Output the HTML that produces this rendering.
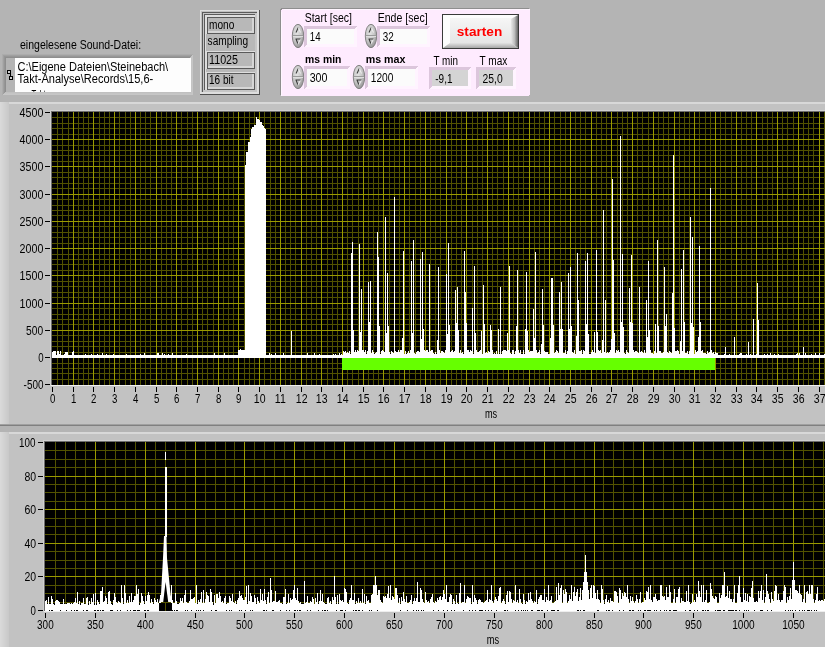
<!DOCTYPE html>
<html><head><meta charset="utf-8"><style>
html,body{margin:0;padding:0;background:#b4b4b4;overflow:hidden;width:825px;height:647px}
svg{display:block;font-family:"Liberation Sans",sans-serif;will-change:transform}
</style></head><body>
<svg width="825" height="647" viewBox="0 0 825 647" shape-rendering="crispEdges"><defs>
<radialGradient id="spg" cx="0.4" cy="0.35" r="0.7"><stop offset="0" stop-color="#e4e4e4"/><stop offset="0.6" stop-color="#c2c2c2"/><stop offset="1" stop-color="#8c8c8c"/></radialGradient>
<linearGradient id="btg" x1="0" y1="0" x2="0" y2="1"><stop offset="0" stop-color="#f8f8f8"/><stop offset="1" stop-color="#e2e2e2"/></linearGradient>
<linearGradient id="btr" x1="0" y1="0" x2="1" y2="0"><stop offset="0" stop-color="#e8e8e8"/><stop offset="0.5" stop-color="#bdbdbd"/><stop offset="1" stop-color="#666666"/></linearGradient>
<linearGradient id="btb" x1="0" y1="0" x2="0" y2="1"><stop offset="0" stop-color="#e2e2e2"/><stop offset="1" stop-color="#a6a6a6"/></linearGradient>
<linearGradient id="strip" x1="0" y1="0" x2="1" y2="0"><stop offset="0" stop-color="#dadada"/><stop offset="1" stop-color="#c8c8c8"/></linearGradient>
</defs><rect x="0" y="0" width="825" height="647" fill="#b4b4b4"/><text x="20.00" y="49.2" font-size="12" fill="#000" textLength="121.07" lengthAdjust="spacingAndGlyphs">eingelesene Sound-Datei:</text><g><rect x="2" y="54" width="191" height="41" fill="#b4b4b4"/><rect x="2" y="54" width="191" height="1" fill="#acacac"/><rect x="3" y="55" width="189" height="1" fill="#a0a0a0"/><rect x="4" y="56" width="187" height="1" fill="#969696"/><rect x="5" y="57" width="185" height="1" fill="#8e8e8e"/><rect x="2" y="54" width="1" height="41" fill="#acacac"/><rect x="3" y="55" width="1" height="39" fill="#a0a0a0"/><rect x="4" y="56" width="1" height="37" fill="#969696"/><rect x="5" y="57" width="1" height="35" fill="#8e8e8e"/><rect x="3" y="94" width="190" height="1" fill="#c6c6c6"/><rect x="192" y="55" width="1" height="40" fill="#c6c6c6"/><rect x="4" y="93" width="188" height="1" fill="#c4c4c4"/><rect x="191" y="56" width="1" height="38" fill="#c4c4c4"/><rect x="5" y="92" width="186" height="1" fill="#c0c0c0"/><rect x="190" y="57" width="1" height="36" fill="#c0c0c0"/><rect x="6" y="91" width="184" height="1" fill="#bcbcbc"/><rect x="189" y="58" width="1" height="34" fill="#bcbcbc"/><rect x="6" y="58" width="9" height="34" fill="#b4b4b4"/><rect x="15" y="58" width="176" height="34" fill="#fdfdfd"/></g><rect x="7" y="70" width="4" height="4" fill="#000"/><rect x="8" y="71" width="2" height="2" fill="#cfcfcf"/><rect x="10" y="74" width="1" height="2" fill="#000"/><rect x="9" y="76" width="4" height="4" fill="#000"/><rect x="10" y="77" width="2" height="2" fill="#cfcfcf"/><clipPath id="pc"><rect x="15" y="58" width="176" height="34"/></clipPath><g clip-path="url(#pc)"><text x="17.50" y="70.8" font-size="12" fill="#000" textLength="150.64" lengthAdjust="spacingAndGlyphs">C:\Eigene Dateien\Steinebach\</text><text x="17.50" y="83" font-size="12" fill="#000" textLength="135.75" lengthAdjust="spacingAndGlyphs">Takt-Analyse\Records\15,6-</text><text x="17.50" y="98.5" font-size="12" fill="#000" textLength="44.29" lengthAdjust="spacingAndGlyphs">sec Takt.wav</text></g><rect x="200" y="10" width="60" height="85" fill="#b8b8b8"/><rect x="200" y="10" width="59" height="1" fill="#dedede"/><rect x="200" y="10" width="1" height="84" fill="#dedede"/><rect x="201" y="11" width="57" height="1" fill="#c0c0c0"/><rect x="201" y="11" width="1" height="82" fill="#c0c0c0"/><rect x="202" y="12" width="56" height="1" fill="#5a5a5a"/><rect x="202" y="12" width="1" height="80" fill="#5a5a5a"/><rect x="203" y="13" width="54" height="1" fill="#c6c6c6"/><rect x="203" y="13" width="1" height="78" fill="#c6c6c6"/><rect x="204" y="14" width="52" height="1" fill="#5a5a5a"/><rect x="204" y="14" width="1" height="76" fill="#5a5a5a"/><rect x="205" y="15" width="50" height="1" fill="#dedede"/><rect x="205" y="15" width="1" height="75" fill="#dedede"/><rect x="200" y="94" width="60" height="1" fill="#505050"/><rect x="259" y="10" width="1" height="85" fill="#505050"/><rect x="201" y="92" width="58" height="1" fill="#dedede"/><rect x="201" y="93" width="58" height="1" fill="#dedede"/><rect x="257" y="11" width="1" height="82" fill="#dedede"/><rect x="258" y="11" width="1" height="83" fill="#dedede"/><rect x="203" y="90" width="54" height="1" fill="#c6c6c6"/><rect x="203" y="91" width="54" height="1" fill="#c6c6c6"/><rect x="255" y="13" width="1" height="78" fill="#c6c6c6"/><rect x="256" y="13" width="1" height="79" fill="#c6c6c6"/><rect x="206" y="16" width="49" height="1" fill="#dedede"/><rect x="206" y="16" width="1" height="18" fill="#dedede"/><rect x="207" y="17" width="47" height="1" fill="#5a5a5a"/><rect x="207" y="17" width="1" height="16" fill="#5a5a5a"/><rect x="208" y="18" width="44" height="13" fill="#b8b8b8"/><rect x="208" y="31" width="46" height="1" fill="#d6d6d6"/><rect x="208" y="32" width="46" height="1" fill="#d6d6d6"/><rect x="252" y="18" width="1" height="15" fill="#d6d6d6"/><rect x="253" y="18" width="1" height="15" fill="#d6d6d6"/><rect x="207" y="33" width="48" height="1" fill="#5a5a5a"/><rect x="254" y="17" width="1" height="17" fill="#5a5a5a"/><rect x="206" y="51" width="49" height="1" fill="#dedede"/><rect x="206" y="51" width="1" height="18" fill="#dedede"/><rect x="207" y="52" width="47" height="1" fill="#5a5a5a"/><rect x="207" y="52" width="1" height="16" fill="#5a5a5a"/><rect x="208" y="53" width="44" height="13" fill="#b8b8b8"/><rect x="208" y="66" width="46" height="1" fill="#d6d6d6"/><rect x="208" y="67" width="46" height="1" fill="#d6d6d6"/><rect x="252" y="53" width="1" height="15" fill="#d6d6d6"/><rect x="253" y="53" width="1" height="15" fill="#d6d6d6"/><rect x="207" y="68" width="48" height="1" fill="#5a5a5a"/><rect x="254" y="52" width="1" height="17" fill="#5a5a5a"/><rect x="206" y="72" width="49" height="1" fill="#dedede"/><rect x="206" y="72" width="1" height="18" fill="#dedede"/><rect x="207" y="73" width="47" height="1" fill="#5a5a5a"/><rect x="207" y="73" width="1" height="16" fill="#5a5a5a"/><rect x="208" y="74" width="44" height="13" fill="#b8b8b8"/><rect x="208" y="87" width="46" height="1" fill="#d6d6d6"/><rect x="208" y="88" width="46" height="1" fill="#d6d6d6"/><rect x="252" y="74" width="1" height="15" fill="#d6d6d6"/><rect x="253" y="74" width="1" height="15" fill="#d6d6d6"/><rect x="207" y="89" width="48" height="1" fill="#5a5a5a"/><rect x="254" y="73" width="1" height="17" fill="#5a5a5a"/><text x="209.00" y="29" font-size="12" fill="#000" textLength="25.31" lengthAdjust="spacingAndGlyphs">mono</text><text x="207.60" y="45.3" font-size="12" fill="#000" textLength="40.53" lengthAdjust="spacingAndGlyphs">sampling</text><text x="209.00" y="63.6" font-size="12" fill="#000" textLength="29.03" lengthAdjust="spacingAndGlyphs">11025</text><text x="209.00" y="84.4" font-size="12" fill="#000" textLength="24.45" lengthAdjust="spacingAndGlyphs">16 bit</text><path d="M283 8 H527 Q530 8 530 11 V93 Q530 96 527 96 H283 Q280 96 280 93 V11 Q280 8 283 8 Z" fill="#8e8e8e"/><path d="M284 9 H527 Q530 9 530 12 V93 Q530 96 527 96 H284 Q281 96 281 93 V12 Q281 9 284 9 Z" fill="#feebfe"/><rect x="284" y="9" width="246" height="1" fill="#fff6ff"/><rect x="281" y="12" width="1" height="84" fill="#fff6ff"/><text x="304.70" y="22" font-size="12" fill="#000" textLength="47.29" lengthAdjust="spacingAndGlyphs">Start [sec]</text><ellipse cx="298.0" cy="36.0" rx="5.7" ry="11.7" fill="url(#spg)" stroke="#7c7c7c" stroke-width="0.9" shape-rendering="auto"/><rect x="293" y="35" width="10" height="1" fill="#9a9a9a"/><rect x="293" y="36" width="10" height="1" fill="#dedede"/><path d="M296.0 32.5 L298.3 27.5" stroke="#3c3c3c" stroke-width="1.1" fill="none" shape-rendering="auto"/><path d="M298.3 27.5 L300.5 32.5" stroke="#f0f0f0" stroke-width="1" fill="none" shape-rendering="auto"/><path d="M295.5 39.0 H300.5 M296.0 39.0 L298.0 44.0" stroke="#3c3c3c" stroke-width="1.1" fill="none" shape-rendering="auto"/><path d="M298.0 44.0 L300.3 39.5" stroke="#eeeeee" stroke-width="1" fill="none" shape-rendering="auto"/><rect x="304" y="26" width="53" height="21" fill="#f6e6f6"/><path d="M304 26 H357 L354 29 H307 V44 L304 47 Z" fill="#dcc6dc"/><path d="M357 26 V47 H304 L307 44 H354 V29 Z" fill="#fff4ff"/><rect x="307" y="29" width="47" height="15" fill="#fbfbfb"/><text x="309.80" y="40.7" font-size="12" fill="#000" textLength="10.77" lengthAdjust="spacingAndGlyphs">14</text><text x="377.70" y="22" font-size="12" fill="#000" textLength="49.91" lengthAdjust="spacingAndGlyphs">Ende [sec]</text><ellipse cx="371.0" cy="36.0" rx="5.7" ry="11.7" fill="url(#spg)" stroke="#7c7c7c" stroke-width="0.9" shape-rendering="auto"/><rect x="366" y="35" width="10" height="1" fill="#9a9a9a"/><rect x="366" y="36" width="10" height="1" fill="#dedede"/><path d="M369.0 32.5 L371.3 27.5" stroke="#3c3c3c" stroke-width="1.1" fill="none" shape-rendering="auto"/><path d="M371.3 27.5 L373.5 32.5" stroke="#f0f0f0" stroke-width="1" fill="none" shape-rendering="auto"/><path d="M368.5 39.0 H373.5 M369.0 39.0 L371.0 44.0" stroke="#3c3c3c" stroke-width="1.1" fill="none" shape-rendering="auto"/><path d="M371.0 44.0 L373.3 39.5" stroke="#eeeeee" stroke-width="1" fill="none" shape-rendering="auto"/><rect x="377" y="26" width="53" height="21" fill="#f6e6f6"/><path d="M377 26 H430 L427 29 H380 V44 L377 47 Z" fill="#dcc6dc"/><path d="M430 26 V47 H377 L380 44 H427 V29 Z" fill="#fff4ff"/><rect x="380" y="29" width="47" height="15" fill="#fbfbfb"/><text x="382.80" y="40.8" font-size="12" fill="#000" textLength="10.96" lengthAdjust="spacingAndGlyphs">32</text><text x="305.10" y="63" font-size="11" font-weight="bold" fill="#000" textLength="36.36" lengthAdjust="spacingAndGlyphs">ms min</text><text x="365.70" y="63" font-size="11" font-weight="bold" fill="#000" textLength="39.73" lengthAdjust="spacingAndGlyphs">ms max</text><ellipse cx="298.0" cy="77.0" rx="5.7" ry="11.7" fill="url(#spg)" stroke="#7c7c7c" stroke-width="0.9" shape-rendering="auto"/><rect x="293" y="76" width="10" height="1" fill="#9a9a9a"/><rect x="293" y="77" width="10" height="1" fill="#dedede"/><path d="M296.0 73.5 L298.3 68.5" stroke="#3c3c3c" stroke-width="1.1" fill="none" shape-rendering="auto"/><path d="M298.3 68.5 L300.5 73.5" stroke="#f0f0f0" stroke-width="1" fill="none" shape-rendering="auto"/><path d="M295.5 80.0 H300.5 M296.0 80.0 L298.0 85.0" stroke="#3c3c3c" stroke-width="1.1" fill="none" shape-rendering="auto"/><path d="M298.0 85.0 L300.3 80.5" stroke="#eeeeee" stroke-width="1" fill="none" shape-rendering="auto"/><rect x="304" y="66" width="46" height="23" fill="#f6e6f6"/><path d="M304 66 H350 L347 69 H307 V86 L304 89 Z" fill="#dcc6dc"/><path d="M350 66 V89 H304 L307 86 H347 V69 Z" fill="#fff4ff"/><rect x="307" y="69" width="40" height="17" fill="#fbfbfb"/><text x="309.70" y="81.5" font-size="12" fill="#000" textLength="17.81" lengthAdjust="spacingAndGlyphs">300</text><ellipse cx="359.0" cy="77.0" rx="5.7" ry="11.7" fill="url(#spg)" stroke="#7c7c7c" stroke-width="0.9" shape-rendering="auto"/><rect x="354" y="76" width="10" height="1" fill="#9a9a9a"/><rect x="354" y="77" width="10" height="1" fill="#dedede"/><path d="M357.0 73.5 L359.3 68.5" stroke="#3c3c3c" stroke-width="1.1" fill="none" shape-rendering="auto"/><path d="M359.3 68.5 L361.5 73.5" stroke="#f0f0f0" stroke-width="1" fill="none" shape-rendering="auto"/><path d="M356.5 80.0 H361.5 M357.0 80.0 L359.0 85.0" stroke="#3c3c3c" stroke-width="1.1" fill="none" shape-rendering="auto"/><path d="M359.0 85.0 L361.3 80.5" stroke="#eeeeee" stroke-width="1" fill="none" shape-rendering="auto"/><rect x="365" y="66" width="53" height="23" fill="#f6e6f6"/><path d="M365 66 H418 L415 69 H368 V86 L365 89 Z" fill="#dcc6dc"/><path d="M418 66 V89 H365 L368 86 H415 V69 Z" fill="#fff4ff"/><rect x="368" y="69" width="47" height="17" fill="#fbfbfb"/><text x="370.80" y="81.5" font-size="12" fill="#000" textLength="22.63" lengthAdjust="spacingAndGlyphs">1200</text><text x="433.40" y="64.6" font-size="12" fill="#000" textLength="24.52" lengthAdjust="spacingAndGlyphs">T min</text><text x="479.60" y="64.6" font-size="12" fill="#000" textLength="27.79" lengthAdjust="spacingAndGlyphs">T max</text><rect x="429" y="67" width="42" height="22" fill="#f6e6f6"/><path d="M429 67 H471 L468 70 H432 V86 L429 89 Z" fill="#dcc6dc"/><path d="M471 67 V89 H429 L432 86 H468 V70 Z" fill="#fff4ff"/><rect x="432" y="70" width="36" height="16" fill="#d4d4d4"/><rect x="476" y="67" width="40" height="22" fill="#f6e6f6"/><path d="M476 67 H516 L513 70 H479 V86 L476 89 Z" fill="#dcc6dc"/><path d="M516 67 V89 H476 L479 86 H513 V70 Z" fill="#fff4ff"/><rect x="479" y="70" width="34" height="16" fill="#d4d4d4"/><text x="435.30" y="83.1" font-size="12" fill="#000" textLength="17.13" lengthAdjust="spacingAndGlyphs">-9,1</text><text x="482.50" y="83.1" font-size="12" fill="#000" textLength="20.13" lengthAdjust="spacingAndGlyphs">25,0</text><rect x="442" y="14" width="77" height="35" fill="#3a3a3a"/><rect x="443" y="15" width="75" height="33" fill="url(#btg)"/><path d="M443 15 H518 L512 18 H450 Z" fill="#fdfdfd" shape-rendering="auto"/><path d="M443 15 L450 18 V43 L443 48 Z" fill="#fdfdfd" shape-rendering="auto"/><path d="M518 15 V48 L511 43 V19 Z" fill="url(#btr)" shape-rendering="auto"/><path d="M443 48 H518 L511 43 H450 Z" fill="url(#btb)" shape-rendering="auto"/><text x="456.80" y="35.8" font-size="12" font-weight="bold" fill="#ff0000" textLength="45.42" lengthAdjust="spacingAndGlyphs">starten</text><rect x="0" y="102" width="825" height="2" fill="#d8d8d8"/><rect x="0" y="104" width="825" height="320" fill="#c2c2c2"/><rect x="0" y="102" width="9" height="322" fill="url(#strip)"/><rect x="0" y="424" width="825" height="1" fill="#a0a0a0"/><rect x="0" y="425" width="825" height="1" fill="#808080"/><rect x="0" y="426" width="825" height="6" fill="#b4b4b4"/><rect x="0" y="432" width="825" height="2" fill="#d8d8d8"/><rect x="0" y="434" width="825" height="213" fill="#c2c2c2"/><rect x="0" y="432" width="9" height="215" fill="url(#strip)"/><rect x="50" y="110" width="775" height="1" fill="#d0d0d0"/><rect x="50" y="110" width="1" height="276" fill="#d0d0d0"/><rect x="51" y="111" width="774" height="1" fill="#6e6e6e"/><rect x="51" y="111" width="1" height="274" fill="#6e6e6e"/><rect x="51" y="385" width="774" height="1" fill="#eeeeee"/><rect x="52" y="112" width="773" height="273" fill="#000"/><rect x="57" y="112" width="1" height="273" fill="#525200"/><rect x="62" y="112" width="1" height="273" fill="#525200"/><rect x="68" y="112" width="1" height="273" fill="#525200"/><rect x="78" y="112" width="1" height="273" fill="#525200"/><rect x="83" y="112" width="1" height="273" fill="#525200"/><rect x="88" y="112" width="1" height="273" fill="#525200"/><rect x="99" y="112" width="1" height="273" fill="#525200"/><rect x="104" y="112" width="1" height="273" fill="#525200"/><rect x="109" y="112" width="1" height="273" fill="#525200"/><rect x="119" y="112" width="1" height="273" fill="#525200"/><rect x="125" y="112" width="1" height="273" fill="#525200"/><rect x="130" y="112" width="1" height="273" fill="#525200"/><rect x="140" y="112" width="1" height="273" fill="#525200"/><rect x="145" y="112" width="1" height="273" fill="#525200"/><rect x="150" y="112" width="1" height="273" fill="#525200"/><rect x="161" y="112" width="1" height="273" fill="#525200"/><rect x="166" y="112" width="1" height="273" fill="#525200"/><rect x="171" y="112" width="1" height="273" fill="#525200"/><rect x="181" y="112" width="1" height="273" fill="#525200"/><rect x="187" y="112" width="1" height="273" fill="#525200"/><rect x="192" y="112" width="1" height="273" fill="#525200"/><rect x="202" y="112" width="1" height="273" fill="#525200"/><rect x="207" y="112" width="1" height="273" fill="#525200"/><rect x="213" y="112" width="1" height="273" fill="#525200"/><rect x="223" y="112" width="1" height="273" fill="#525200"/><rect x="228" y="112" width="1" height="273" fill="#525200"/><rect x="233" y="112" width="1" height="273" fill="#525200"/><rect x="244" y="112" width="1" height="273" fill="#525200"/><rect x="249" y="112" width="1" height="273" fill="#525200"/><rect x="254" y="112" width="1" height="273" fill="#525200"/><rect x="264" y="112" width="1" height="273" fill="#525200"/><rect x="270" y="112" width="1" height="273" fill="#525200"/><rect x="275" y="112" width="1" height="273" fill="#525200"/><rect x="285" y="112" width="1" height="273" fill="#525200"/><rect x="290" y="112" width="1" height="273" fill="#525200"/><rect x="295" y="112" width="1" height="273" fill="#525200"/><rect x="306" y="112" width="1" height="273" fill="#525200"/><rect x="311" y="112" width="1" height="273" fill="#525200"/><rect x="316" y="112" width="1" height="273" fill="#525200"/><rect x="327" y="112" width="1" height="273" fill="#525200"/><rect x="332" y="112" width="1" height="273" fill="#525200"/><rect x="337" y="112" width="1" height="273" fill="#525200"/><rect x="347" y="112" width="1" height="273" fill="#525200"/><rect x="352" y="112" width="1" height="273" fill="#525200"/><rect x="358" y="112" width="1" height="273" fill="#525200"/><rect x="368" y="112" width="1" height="273" fill="#525200"/><rect x="373" y="112" width="1" height="273" fill="#525200"/><rect x="378" y="112" width="1" height="273" fill="#525200"/><rect x="389" y="112" width="1" height="273" fill="#525200"/><rect x="394" y="112" width="1" height="273" fill="#525200"/><rect x="399" y="112" width="1" height="273" fill="#525200"/><rect x="409" y="112" width="1" height="273" fill="#525200"/><rect x="415" y="112" width="1" height="273" fill="#525200"/><rect x="420" y="112" width="1" height="273" fill="#525200"/><rect x="430" y="112" width="1" height="273" fill="#525200"/><rect x="435" y="112" width="1" height="273" fill="#525200"/><rect x="440" y="112" width="1" height="273" fill="#525200"/><rect x="451" y="112" width="1" height="273" fill="#525200"/><rect x="456" y="112" width="1" height="273" fill="#525200"/><rect x="461" y="112" width="1" height="273" fill="#525200"/><rect x="472" y="112" width="1" height="273" fill="#525200"/><rect x="477" y="112" width="1" height="273" fill="#525200"/><rect x="482" y="112" width="1" height="273" fill="#525200"/><rect x="492" y="112" width="1" height="273" fill="#525200"/><rect x="497" y="112" width="1" height="273" fill="#525200"/><rect x="503" y="112" width="1" height="273" fill="#525200"/><rect x="513" y="112" width="1" height="273" fill="#525200"/><rect x="518" y="112" width="1" height="273" fill="#525200"/><rect x="523" y="112" width="1" height="273" fill="#525200"/><rect x="534" y="112" width="1" height="273" fill="#525200"/><rect x="539" y="112" width="1" height="273" fill="#525200"/><rect x="544" y="112" width="1" height="273" fill="#525200"/><rect x="554" y="112" width="1" height="273" fill="#525200"/><rect x="560" y="112" width="1" height="273" fill="#525200"/><rect x="565" y="112" width="1" height="273" fill="#525200"/><rect x="575" y="112" width="1" height="273" fill="#525200"/><rect x="580" y="112" width="1" height="273" fill="#525200"/><rect x="585" y="112" width="1" height="273" fill="#525200"/><rect x="596" y="112" width="1" height="273" fill="#525200"/><rect x="601" y="112" width="1" height="273" fill="#525200"/><rect x="606" y="112" width="1" height="273" fill="#525200"/><rect x="617" y="112" width="1" height="273" fill="#525200"/><rect x="622" y="112" width="1" height="273" fill="#525200"/><rect x="627" y="112" width="1" height="273" fill="#525200"/><rect x="637" y="112" width="1" height="273" fill="#525200"/><rect x="642" y="112" width="1" height="273" fill="#525200"/><rect x="648" y="112" width="1" height="273" fill="#525200"/><rect x="658" y="112" width="1" height="273" fill="#525200"/><rect x="663" y="112" width="1" height="273" fill="#525200"/><rect x="668" y="112" width="1" height="273" fill="#525200"/><rect x="679" y="112" width="1" height="273" fill="#525200"/><rect x="684" y="112" width="1" height="273" fill="#525200"/><rect x="689" y="112" width="1" height="273" fill="#525200"/><rect x="699" y="112" width="1" height="273" fill="#525200"/><rect x="705" y="112" width="1" height="273" fill="#525200"/><rect x="710" y="112" width="1" height="273" fill="#525200"/><rect x="720" y="112" width="1" height="273" fill="#525200"/><rect x="725" y="112" width="1" height="273" fill="#525200"/><rect x="731" y="112" width="1" height="273" fill="#525200"/><rect x="741" y="112" width="1" height="273" fill="#525200"/><rect x="746" y="112" width="1" height="273" fill="#525200"/><rect x="751" y="112" width="1" height="273" fill="#525200"/><rect x="762" y="112" width="1" height="273" fill="#525200"/><rect x="767" y="112" width="1" height="273" fill="#525200"/><rect x="772" y="112" width="1" height="273" fill="#525200"/><rect x="782" y="112" width="1" height="273" fill="#525200"/><rect x="787" y="112" width="1" height="273" fill="#525200"/><rect x="793" y="112" width="1" height="273" fill="#525200"/><rect x="803" y="112" width="1" height="273" fill="#525200"/><rect x="808" y="112" width="1" height="273" fill="#525200"/><rect x="813" y="112" width="1" height="273" fill="#525200"/><rect x="824" y="112" width="1" height="273" fill="#525200"/><rect x="52" y="379" width="773" height="1" fill="#525200"/><rect x="52" y="373" width="773" height="1" fill="#525200"/><rect x="52" y="368" width="773" height="1" fill="#525200"/><rect x="52" y="363" width="773" height="1" fill="#525200"/><rect x="52" y="352" width="773" height="1" fill="#525200"/><rect x="52" y="346" width="773" height="1" fill="#525200"/><rect x="52" y="341" width="773" height="1" fill="#525200"/><rect x="52" y="335" width="773" height="1" fill="#525200"/><rect x="52" y="324" width="773" height="1" fill="#525200"/><rect x="52" y="319" width="773" height="1" fill="#525200"/><rect x="52" y="314" width="773" height="1" fill="#525200"/><rect x="52" y="308" width="773" height="1" fill="#525200"/><rect x="52" y="297" width="773" height="1" fill="#525200"/><rect x="52" y="292" width="773" height="1" fill="#525200"/><rect x="52" y="286" width="773" height="1" fill="#525200"/><rect x="52" y="281" width="773" height="1" fill="#525200"/><rect x="52" y="270" width="773" height="1" fill="#525200"/><rect x="52" y="264" width="773" height="1" fill="#525200"/><rect x="52" y="259" width="773" height="1" fill="#525200"/><rect x="52" y="254" width="773" height="1" fill="#525200"/><rect x="52" y="243" width="773" height="1" fill="#525200"/><rect x="52" y="237" width="773" height="1" fill="#525200"/><rect x="52" y="232" width="773" height="1" fill="#525200"/><rect x="52" y="226" width="773" height="1" fill="#525200"/><rect x="52" y="215" width="773" height="1" fill="#525200"/><rect x="52" y="210" width="773" height="1" fill="#525200"/><rect x="52" y="205" width="773" height="1" fill="#525200"/><rect x="52" y="199" width="773" height="1" fill="#525200"/><rect x="52" y="188" width="773" height="1" fill="#525200"/><rect x="52" y="183" width="773" height="1" fill="#525200"/><rect x="52" y="177" width="773" height="1" fill="#525200"/><rect x="52" y="172" width="773" height="1" fill="#525200"/><rect x="52" y="161" width="773" height="1" fill="#525200"/><rect x="52" y="155" width="773" height="1" fill="#525200"/><rect x="52" y="150" width="773" height="1" fill="#525200"/><rect x="52" y="145" width="773" height="1" fill="#525200"/><rect x="52" y="134" width="773" height="1" fill="#525200"/><rect x="52" y="128" width="773" height="1" fill="#525200"/><rect x="52" y="123" width="773" height="1" fill="#525200"/><rect x="52" y="117" width="773" height="1" fill="#525200"/><rect x="73" y="112" width="1" height="273" fill="#9a9a00"/><rect x="93" y="112" width="1" height="273" fill="#9a9a00"/><rect x="114" y="112" width="1" height="273" fill="#9a9a00"/><rect x="135" y="112" width="1" height="273" fill="#9a9a00"/><rect x="156" y="112" width="1" height="273" fill="#9a9a00"/><rect x="176" y="112" width="1" height="273" fill="#9a9a00"/><rect x="197" y="112" width="1" height="273" fill="#9a9a00"/><rect x="218" y="112" width="1" height="273" fill="#9a9a00"/><rect x="238" y="112" width="1" height="273" fill="#9a9a00"/><rect x="259" y="112" width="1" height="273" fill="#9a9a00"/><rect x="280" y="112" width="1" height="273" fill="#9a9a00"/><rect x="301" y="112" width="1" height="273" fill="#9a9a00"/><rect x="321" y="112" width="1" height="273" fill="#9a9a00"/><rect x="342" y="112" width="1" height="273" fill="#9a9a00"/><rect x="363" y="112" width="1" height="273" fill="#9a9a00"/><rect x="383" y="112" width="1" height="273" fill="#9a9a00"/><rect x="404" y="112" width="1" height="273" fill="#9a9a00"/><rect x="425" y="112" width="1" height="273" fill="#9a9a00"/><rect x="446" y="112" width="1" height="273" fill="#9a9a00"/><rect x="466" y="112" width="1" height="273" fill="#9a9a00"/><rect x="487" y="112" width="1" height="273" fill="#9a9a00"/><rect x="508" y="112" width="1" height="273" fill="#9a9a00"/><rect x="529" y="112" width="1" height="273" fill="#9a9a00"/><rect x="549" y="112" width="1" height="273" fill="#9a9a00"/><rect x="570" y="112" width="1" height="273" fill="#9a9a00"/><rect x="591" y="112" width="1" height="273" fill="#9a9a00"/><rect x="611" y="112" width="1" height="273" fill="#9a9a00"/><rect x="632" y="112" width="1" height="273" fill="#9a9a00"/><rect x="653" y="112" width="1" height="273" fill="#9a9a00"/><rect x="674" y="112" width="1" height="273" fill="#9a9a00"/><rect x="694" y="112" width="1" height="273" fill="#9a9a00"/><rect x="715" y="112" width="1" height="273" fill="#9a9a00"/><rect x="736" y="112" width="1" height="273" fill="#9a9a00"/><rect x="756" y="112" width="1" height="273" fill="#9a9a00"/><rect x="777" y="112" width="1" height="273" fill="#9a9a00"/><rect x="798" y="112" width="1" height="273" fill="#9a9a00"/><rect x="819" y="112" width="1" height="273" fill="#9a9a00"/><rect x="52" y="357" width="773" height="1" fill="#9a9a00"/><rect x="52" y="330" width="773" height="1" fill="#9a9a00"/><rect x="52" y="303" width="773" height="1" fill="#9a9a00"/><rect x="52" y="275" width="773" height="1" fill="#9a9a00"/><rect x="52" y="248" width="773" height="1" fill="#9a9a00"/><rect x="52" y="221" width="773" height="1" fill="#9a9a00"/><rect x="52" y="194" width="773" height="1" fill="#9a9a00"/><rect x="52" y="166" width="773" height="1" fill="#9a9a00"/><rect x="52" y="139" width="773" height="1" fill="#9a9a00"/><rect x="45" y="384" width="5" height="1" fill="#000"/><text x="23.60" y="388.8" font-size="13" fill="#000" textLength="19.82" lengthAdjust="spacingAndGlyphs">-500</text><rect x="45" y="357" width="5" height="1" fill="#000"/><text x="38.20" y="361.8" font-size="13" fill="#000" textLength="5.37" lengthAdjust="spacingAndGlyphs">0</text><rect x="45" y="330" width="5" height="1" fill="#000"/><text x="26.10" y="334.8" font-size="13" fill="#000" textLength="17.07" lengthAdjust="spacingAndGlyphs">500</text><rect x="45" y="303" width="5" height="1" fill="#000"/><text x="19.60" y="307.8" font-size="13" fill="#000" textLength="23.75" lengthAdjust="spacingAndGlyphs">1000</text><rect x="45" y="275" width="5" height="1" fill="#000"/><text x="19.60" y="279.8" font-size="13" fill="#000" textLength="23.75" lengthAdjust="spacingAndGlyphs">1500</text><rect x="45" y="248" width="5" height="1" fill="#000"/><text x="19.60" y="252.8" font-size="13" fill="#000" textLength="23.75" lengthAdjust="spacingAndGlyphs">2000</text><rect x="45" y="221" width="5" height="1" fill="#000"/><text x="19.60" y="225.8" font-size="13" fill="#000" textLength="23.75" lengthAdjust="spacingAndGlyphs">2500</text><rect x="45" y="194" width="5" height="1" fill="#000"/><text x="19.60" y="198.8" font-size="13" fill="#000" textLength="23.75" lengthAdjust="spacingAndGlyphs">3000</text><rect x="45" y="166" width="5" height="1" fill="#000"/><text x="19.60" y="170.8" font-size="13" fill="#000" textLength="23.75" lengthAdjust="spacingAndGlyphs">3500</text><rect x="45" y="139" width="5" height="1" fill="#000"/><text x="19.60" y="143.8" font-size="13" fill="#000" textLength="23.75" lengthAdjust="spacingAndGlyphs">4000</text><rect x="45" y="112" width="5" height="1" fill="#000"/><text x="19.60" y="116.8" font-size="13" fill="#000" textLength="23.75" lengthAdjust="spacingAndGlyphs">4500</text><rect x="52" y="387" width="1" height="5" fill="#000"/><text x="49.90" y="403" font-size="13" fill="#000" textLength="5.37" lengthAdjust="spacingAndGlyphs">0</text><rect x="73" y="387" width="1" height="5" fill="#000"/><text x="70.90" y="403" font-size="13" fill="#000" textLength="5.37" lengthAdjust="spacingAndGlyphs">1</text><rect x="93" y="387" width="1" height="5" fill="#000"/><text x="90.90" y="403" font-size="13" fill="#000" textLength="5.37" lengthAdjust="spacingAndGlyphs">2</text><rect x="114" y="387" width="1" height="5" fill="#000"/><text x="111.90" y="403" font-size="13" fill="#000" textLength="5.37" lengthAdjust="spacingAndGlyphs">3</text><rect x="135" y="387" width="1" height="5" fill="#000"/><text x="132.90" y="403" font-size="13" fill="#000" textLength="5.37" lengthAdjust="spacingAndGlyphs">4</text><rect x="156" y="387" width="1" height="5" fill="#000"/><text x="153.90" y="403" font-size="13" fill="#000" textLength="5.37" lengthAdjust="spacingAndGlyphs">5</text><rect x="176" y="387" width="1" height="5" fill="#000"/><text x="173.90" y="403" font-size="13" fill="#000" textLength="5.37" lengthAdjust="spacingAndGlyphs">6</text><rect x="197" y="387" width="1" height="5" fill="#000"/><text x="194.90" y="403" font-size="13" fill="#000" textLength="5.37" lengthAdjust="spacingAndGlyphs">7</text><rect x="218" y="387" width="1" height="5" fill="#000"/><text x="215.90" y="403" font-size="13" fill="#000" textLength="5.37" lengthAdjust="spacingAndGlyphs">8</text><rect x="238" y="387" width="1" height="5" fill="#000"/><text x="235.90" y="403" font-size="13" fill="#000" textLength="5.37" lengthAdjust="spacingAndGlyphs">9</text><rect x="259" y="387" width="1" height="5" fill="#000"/><text x="253.85" y="403" font-size="13" fill="#000" textLength="11.68" lengthAdjust="spacingAndGlyphs">10</text><rect x="280" y="387" width="1" height="5" fill="#000"/><text x="274.85" y="403" font-size="13" fill="#000" textLength="10.90" lengthAdjust="spacingAndGlyphs">11</text><rect x="301" y="387" width="1" height="5" fill="#000"/><text x="295.85" y="403" font-size="13" fill="#000" textLength="11.68" lengthAdjust="spacingAndGlyphs">12</text><rect x="321" y="387" width="1" height="5" fill="#000"/><text x="315.85" y="403" font-size="13" fill="#000" textLength="11.68" lengthAdjust="spacingAndGlyphs">13</text><rect x="342" y="387" width="1" height="5" fill="#000"/><text x="336.85" y="403" font-size="13" fill="#000" textLength="11.68" lengthAdjust="spacingAndGlyphs">14</text><rect x="363" y="387" width="1" height="5" fill="#000"/><text x="357.85" y="403" font-size="13" fill="#000" textLength="11.68" lengthAdjust="spacingAndGlyphs">15</text><rect x="383" y="387" width="1" height="5" fill="#000"/><text x="377.85" y="403" font-size="13" fill="#000" textLength="11.68" lengthAdjust="spacingAndGlyphs">16</text><rect x="404" y="387" width="1" height="5" fill="#000"/><text x="398.85" y="403" font-size="13" fill="#000" textLength="11.68" lengthAdjust="spacingAndGlyphs">17</text><rect x="425" y="387" width="1" height="5" fill="#000"/><text x="419.85" y="403" font-size="13" fill="#000" textLength="11.68" lengthAdjust="spacingAndGlyphs">18</text><rect x="446" y="387" width="1" height="5" fill="#000"/><text x="440.85" y="403" font-size="13" fill="#000" textLength="11.68" lengthAdjust="spacingAndGlyphs">19</text><rect x="466" y="387" width="1" height="5" fill="#000"/><text x="460.85" y="403" font-size="13" fill="#000" textLength="11.68" lengthAdjust="spacingAndGlyphs">20</text><rect x="487" y="387" width="1" height="5" fill="#000"/><text x="481.85" y="403" font-size="13" fill="#000" textLength="11.68" lengthAdjust="spacingAndGlyphs">21</text><rect x="508" y="387" width="1" height="5" fill="#000"/><text x="502.85" y="403" font-size="13" fill="#000" textLength="11.68" lengthAdjust="spacingAndGlyphs">22</text><rect x="529" y="387" width="1" height="5" fill="#000"/><text x="523.85" y="403" font-size="13" fill="#000" textLength="11.68" lengthAdjust="spacingAndGlyphs">23</text><rect x="549" y="387" width="1" height="5" fill="#000"/><text x="543.85" y="403" font-size="13" fill="#000" textLength="11.68" lengthAdjust="spacingAndGlyphs">24</text><rect x="570" y="387" width="1" height="5" fill="#000"/><text x="564.85" y="403" font-size="13" fill="#000" textLength="11.68" lengthAdjust="spacingAndGlyphs">25</text><rect x="591" y="387" width="1" height="5" fill="#000"/><text x="585.85" y="403" font-size="13" fill="#000" textLength="11.68" lengthAdjust="spacingAndGlyphs">26</text><rect x="611" y="387" width="1" height="5" fill="#000"/><text x="605.85" y="403" font-size="13" fill="#000" textLength="11.68" lengthAdjust="spacingAndGlyphs">27</text><rect x="632" y="387" width="1" height="5" fill="#000"/><text x="626.85" y="403" font-size="13" fill="#000" textLength="11.68" lengthAdjust="spacingAndGlyphs">28</text><rect x="653" y="387" width="1" height="5" fill="#000"/><text x="647.85" y="403" font-size="13" fill="#000" textLength="11.68" lengthAdjust="spacingAndGlyphs">29</text><rect x="674" y="387" width="1" height="5" fill="#000"/><text x="668.85" y="403" font-size="13" fill="#000" textLength="11.68" lengthAdjust="spacingAndGlyphs">30</text><rect x="694" y="387" width="1" height="5" fill="#000"/><text x="688.85" y="403" font-size="13" fill="#000" textLength="11.68" lengthAdjust="spacingAndGlyphs">31</text><rect x="715" y="387" width="1" height="5" fill="#000"/><text x="709.85" y="403" font-size="13" fill="#000" textLength="11.68" lengthAdjust="spacingAndGlyphs">32</text><rect x="736" y="387" width="1" height="5" fill="#000"/><text x="730.85" y="403" font-size="13" fill="#000" textLength="11.68" lengthAdjust="spacingAndGlyphs">33</text><rect x="756" y="387" width="1" height="5" fill="#000"/><text x="750.85" y="403" font-size="13" fill="#000" textLength="11.68" lengthAdjust="spacingAndGlyphs">34</text><rect x="777" y="387" width="1" height="5" fill="#000"/><text x="771.85" y="403" font-size="13" fill="#000" textLength="11.68" lengthAdjust="spacingAndGlyphs">35</text><rect x="798" y="387" width="1" height="5" fill="#000"/><text x="792.85" y="403" font-size="13" fill="#000" textLength="11.68" lengthAdjust="spacingAndGlyphs">36</text><rect x="819" y="387" width="1" height="5" fill="#000"/><text x="813.85" y="403" font-size="13" fill="#000" textLength="11.68" lengthAdjust="spacingAndGlyphs">37</text><text x="484.90" y="418" font-size="12" fill="#000" textLength="12.20" lengthAdjust="spacingAndGlyphs">ms</text><rect x="43" y="440" width="782" height="1" fill="#d0d0d0"/><rect x="43" y="440" width="1" height="172" fill="#d0d0d0"/><rect x="44" y="441" width="781" height="1" fill="#6e6e6e"/><rect x="44" y="441" width="1" height="170" fill="#6e6e6e"/><rect x="44" y="611" width="781" height="1" fill="#eeeeee"/><rect x="45" y="442" width="780" height="169" fill="#000"/><rect x="55" y="442" width="1" height="169" fill="#525200"/><rect x="65" y="442" width="1" height="169" fill="#525200"/><rect x="75" y="442" width="1" height="169" fill="#525200"/><rect x="85" y="442" width="1" height="169" fill="#525200"/><rect x="105" y="442" width="1" height="169" fill="#525200"/><rect x="115" y="442" width="1" height="169" fill="#525200"/><rect x="125" y="442" width="1" height="169" fill="#525200"/><rect x="135" y="442" width="1" height="169" fill="#525200"/><rect x="155" y="442" width="1" height="169" fill="#525200"/><rect x="165" y="442" width="1" height="169" fill="#525200"/><rect x="175" y="442" width="1" height="169" fill="#525200"/><rect x="185" y="442" width="1" height="169" fill="#525200"/><rect x="205" y="442" width="1" height="169" fill="#525200"/><rect x="215" y="442" width="1" height="169" fill="#525200"/><rect x="225" y="442" width="1" height="169" fill="#525200"/><rect x="234" y="442" width="1" height="169" fill="#525200"/><rect x="254" y="442" width="1" height="169" fill="#525200"/><rect x="264" y="442" width="1" height="169" fill="#525200"/><rect x="274" y="442" width="1" height="169" fill="#525200"/><rect x="284" y="442" width="1" height="169" fill="#525200"/><rect x="304" y="442" width="1" height="169" fill="#525200"/><rect x="314" y="442" width="1" height="169" fill="#525200"/><rect x="324" y="442" width="1" height="169" fill="#525200"/><rect x="334" y="442" width="1" height="169" fill="#525200"/><rect x="354" y="442" width="1" height="169" fill="#525200"/><rect x="364" y="442" width="1" height="169" fill="#525200"/><rect x="374" y="442" width="1" height="169" fill="#525200"/><rect x="384" y="442" width="1" height="169" fill="#525200"/><rect x="404" y="442" width="1" height="169" fill="#525200"/><rect x="414" y="442" width="1" height="169" fill="#525200"/><rect x="424" y="442" width="1" height="169" fill="#525200"/><rect x="434" y="442" width="1" height="169" fill="#525200"/><rect x="454" y="442" width="1" height="169" fill="#525200"/><rect x="464" y="442" width="1" height="169" fill="#525200"/><rect x="474" y="442" width="1" height="169" fill="#525200"/><rect x="484" y="442" width="1" height="169" fill="#525200"/><rect x="504" y="442" width="1" height="169" fill="#525200"/><rect x="514" y="442" width="1" height="169" fill="#525200"/><rect x="524" y="442" width="1" height="169" fill="#525200"/><rect x="534" y="442" width="1" height="169" fill="#525200"/><rect x="554" y="442" width="1" height="169" fill="#525200"/><rect x="564" y="442" width="1" height="169" fill="#525200"/><rect x="574" y="442" width="1" height="169" fill="#525200"/><rect x="584" y="442" width="1" height="169" fill="#525200"/><rect x="603" y="442" width="1" height="169" fill="#525200"/><rect x="613" y="442" width="1" height="169" fill="#525200"/><rect x="623" y="442" width="1" height="169" fill="#525200"/><rect x="633" y="442" width="1" height="169" fill="#525200"/><rect x="653" y="442" width="1" height="169" fill="#525200"/><rect x="663" y="442" width="1" height="169" fill="#525200"/><rect x="673" y="442" width="1" height="169" fill="#525200"/><rect x="683" y="442" width="1" height="169" fill="#525200"/><rect x="703" y="442" width="1" height="169" fill="#525200"/><rect x="713" y="442" width="1" height="169" fill="#525200"/><rect x="723" y="442" width="1" height="169" fill="#525200"/><rect x="733" y="442" width="1" height="169" fill="#525200"/><rect x="753" y="442" width="1" height="169" fill="#525200"/><rect x="763" y="442" width="1" height="169" fill="#525200"/><rect x="773" y="442" width="1" height="169" fill="#525200"/><rect x="783" y="442" width="1" height="169" fill="#525200"/><rect x="803" y="442" width="1" height="169" fill="#525200"/><rect x="813" y="442" width="1" height="169" fill="#525200"/><rect x="823" y="442" width="1" height="169" fill="#525200"/><rect x="45" y="602" width="780" height="1" fill="#525200"/><rect x="45" y="593" width="780" height="1" fill="#525200"/><rect x="45" y="585" width="780" height="1" fill="#525200"/><rect x="45" y="568" width="780" height="1" fill="#525200"/><rect x="45" y="560" width="780" height="1" fill="#525200"/><rect x="45" y="551" width="780" height="1" fill="#525200"/><rect x="45" y="534" width="780" height="1" fill="#525200"/><rect x="45" y="526" width="780" height="1" fill="#525200"/><rect x="45" y="518" width="780" height="1" fill="#525200"/><rect x="45" y="501" width="780" height="1" fill="#525200"/><rect x="45" y="492" width="780" height="1" fill="#525200"/><rect x="45" y="484" width="780" height="1" fill="#525200"/><rect x="45" y="467" width="780" height="1" fill="#525200"/><rect x="45" y="459" width="780" height="1" fill="#525200"/><rect x="45" y="450" width="780" height="1" fill="#525200"/><rect x="95" y="442" width="1" height="169" fill="#9a9a00"/><rect x="145" y="442" width="1" height="169" fill="#9a9a00"/><rect x="195" y="442" width="1" height="169" fill="#9a9a00"/><rect x="244" y="442" width="1" height="169" fill="#9a9a00"/><rect x="294" y="442" width="1" height="169" fill="#9a9a00"/><rect x="344" y="442" width="1" height="169" fill="#9a9a00"/><rect x="394" y="442" width="1" height="169" fill="#9a9a00"/><rect x="444" y="442" width="1" height="169" fill="#9a9a00"/><rect x="494" y="442" width="1" height="169" fill="#9a9a00"/><rect x="544" y="442" width="1" height="169" fill="#9a9a00"/><rect x="594" y="442" width="1" height="169" fill="#9a9a00"/><rect x="643" y="442" width="1" height="169" fill="#9a9a00"/><rect x="693" y="442" width="1" height="169" fill="#9a9a00"/><rect x="743" y="442" width="1" height="169" fill="#9a9a00"/><rect x="793" y="442" width="1" height="169" fill="#9a9a00"/><rect x="45" y="576" width="780" height="1" fill="#9a9a00"/><rect x="45" y="543" width="780" height="1" fill="#9a9a00"/><rect x="45" y="509" width="780" height="1" fill="#9a9a00"/><rect x="45" y="476" width="780" height="1" fill="#9a9a00"/><rect x="38" y="610" width="5" height="1" fill="#000"/><text x="30.60" y="615" font-size="13" fill="#000" textLength="5.37" lengthAdjust="spacingAndGlyphs">0</text><rect x="38" y="576" width="5" height="1" fill="#000"/><text x="24.50" y="581" font-size="13" fill="#000" textLength="11.68" lengthAdjust="spacingAndGlyphs">20</text><rect x="38" y="543" width="5" height="1" fill="#000"/><text x="24.50" y="548" font-size="13" fill="#000" textLength="11.68" lengthAdjust="spacingAndGlyphs">40</text><rect x="38" y="509" width="5" height="1" fill="#000"/><text x="24.50" y="514" font-size="13" fill="#000" textLength="11.68" lengthAdjust="spacingAndGlyphs">60</text><rect x="38" y="476" width="5" height="1" fill="#000"/><text x="24.50" y="481" font-size="13" fill="#000" textLength="11.68" lengthAdjust="spacingAndGlyphs">80</text><rect x="38" y="442" width="5" height="1" fill="#000"/><text x="19.10" y="447" font-size="13" fill="#000" textLength="16.47" lengthAdjust="spacingAndGlyphs">100</text><rect x="45" y="613" width="1" height="5" fill="#000"/><text x="37.10" y="628.6" font-size="13" fill="#000" textLength="16.57" lengthAdjust="spacingAndGlyphs">300</text><rect x="95" y="613" width="1" height="5" fill="#000"/><text x="87.10" y="628.6" font-size="13" fill="#000" textLength="16.57" lengthAdjust="spacingAndGlyphs">350</text><rect x="145" y="613" width="1" height="5" fill="#000"/><text x="137.10" y="628.6" font-size="13" fill="#000" textLength="16.57" lengthAdjust="spacingAndGlyphs">400</text><rect x="195" y="613" width="1" height="5" fill="#000"/><text x="187.10" y="628.6" font-size="13" fill="#000" textLength="16.57" lengthAdjust="spacingAndGlyphs">450</text><rect x="244" y="613" width="1" height="5" fill="#000"/><text x="236.10" y="628.6" font-size="13" fill="#000" textLength="16.57" lengthAdjust="spacingAndGlyphs">500</text><rect x="294" y="613" width="1" height="5" fill="#000"/><text x="286.10" y="628.6" font-size="13" fill="#000" textLength="16.57" lengthAdjust="spacingAndGlyphs">550</text><rect x="344" y="613" width="1" height="5" fill="#000"/><text x="336.10" y="628.6" font-size="13" fill="#000" textLength="16.57" lengthAdjust="spacingAndGlyphs">600</text><rect x="394" y="613" width="1" height="5" fill="#000"/><text x="386.10" y="628.6" font-size="13" fill="#000" textLength="16.57" lengthAdjust="spacingAndGlyphs">650</text><rect x="444" y="613" width="1" height="5" fill="#000"/><text x="436.10" y="628.6" font-size="13" fill="#000" textLength="16.57" lengthAdjust="spacingAndGlyphs">700</text><rect x="494" y="613" width="1" height="5" fill="#000"/><text x="486.10" y="628.6" font-size="13" fill="#000" textLength="16.57" lengthAdjust="spacingAndGlyphs">750</text><rect x="544" y="613" width="1" height="5" fill="#000"/><text x="536.10" y="628.6" font-size="13" fill="#000" textLength="16.57" lengthAdjust="spacingAndGlyphs">800</text><rect x="594" y="613" width="1" height="5" fill="#000"/><text x="586.10" y="628.6" font-size="13" fill="#000" textLength="16.57" lengthAdjust="spacingAndGlyphs">850</text><rect x="643" y="613" width="1" height="5" fill="#000"/><text x="635.10" y="628.6" font-size="13" fill="#000" textLength="16.57" lengthAdjust="spacingAndGlyphs">900</text><rect x="693" y="613" width="1" height="5" fill="#000"/><text x="685.10" y="628.6" font-size="13" fill="#000" textLength="16.57" lengthAdjust="spacingAndGlyphs">950</text><rect x="743" y="613" width="1" height="5" fill="#000"/><text x="732.25" y="628.6" font-size="13" fill="#000" textLength="22.45" lengthAdjust="spacingAndGlyphs">1000</text><rect x="793" y="613" width="1" height="5" fill="#000"/><text x="782.25" y="628.6" font-size="13" fill="#000" textLength="22.45" lengthAdjust="spacingAndGlyphs">1050</text><text x="486.85" y="643.6" font-size="12" fill="#000" textLength="12.30" lengthAdjust="spacingAndGlyphs">ms</text><path d="M52 352H53V358H52ZM53 351H56V358H53ZM56 355H57V358H56ZM57 351H59V358H57ZM59 354H60V358H59ZM60 351H61V358H60ZM61 355H64V358H61ZM64 354H65V358H64ZM65 352H68V358H65ZM68 355H72V358H68ZM72 352H73V358H72ZM73 351H74V358H73ZM74 355H85V358H74ZM85 354H86V358H85ZM86 355H91V358H86ZM91 354H92V358H91ZM92 355H97V358H92ZM97 354H98V358H97ZM98 355H102V358H98ZM102 353H103V358H102ZM103 355H106V358H103ZM106 354H107V358H106ZM107 355H113V358H107ZM113 354H114V358H113ZM114 355H126V358H114ZM126 354H127V358H126ZM127 355H140V358H127ZM140 354H141V358H140ZM141 355H144V358H141ZM144 353H145V358H144ZM145 355H157V358H145ZM157 353H159V358H157ZM159 355H162V358H159ZM162 353H163V358H162ZM163 355H164V358H163ZM164 354H165V358H164ZM165 355H168V358H165ZM168 354H169V358H168ZM169 355H172V358H169ZM172 353H173V358H172ZM173 355H186V358H173ZM186 354H187V358H186ZM187 355H214V358H187ZM214 353H215V358H214ZM215 355H224V358H215ZM224 353H225V358H224ZM225 355H238V358H225ZM238 350H240V358H238ZM240 349H241V358H240ZM241 350H245V358H241ZM245 165H246V358H245ZM246 152H248V358H246ZM248 142H250V358H248ZM250 137H251V358H250ZM251 129H252V358H251ZM252 127H254V358H252ZM254 125H256V358H254ZM256 117H257V358H256ZM257 119H259V358H257ZM259 120H260V358H259ZM260 122H262V358H260ZM262 125H263V358H262ZM263 126H264V358H263ZM264 128H265V358H264ZM265 129H266V358H265ZM266 355H269V358H266ZM269 353H270V358H269ZM270 355H271V358H270ZM271 354H272V358H271ZM272 355H275V358H272ZM275 353H276V358H275ZM276 355H283V358H276ZM283 353H284V358H283ZM284 355H291V358H284ZM291 331H292V358H291ZM292 355H307V358H292ZM307 353H308V358H307ZM308 355H314V358H308ZM314 353H315V358H314ZM315 355H319V358H315ZM319 354H320V358H319ZM320 355H333V358H320ZM333 354H334V358H333ZM334 355H335V358H334ZM335 354H336V358H335ZM336 355H339V358H336ZM339 353H340V358H339ZM340 355H341V358H340ZM341 354H342V358H341ZM342 355H343V358H342ZM343 351H344V358H343ZM344 352H345V358H344ZM345 351H346V358H345ZM346 353H347V358H346ZM347 352H348V358H347ZM348 353H349V358H348ZM349 351H350V358H349ZM350 354H351V358H350ZM351 253H352V358H351ZM352 242H353V358H352ZM353 330H354V358H353ZM354 352H355V358H354ZM355 350H356V358H355ZM356 352H357V358H356ZM357 350H358V358H357ZM358 351H359V358H358ZM359 244H360V358H359ZM360 332H361V358H360ZM361 289H362V358H361ZM362 350H364V358H362ZM364 352H365V358H364ZM365 350H366V358H365ZM366 354H367V358H366ZM367 351H368V358H367ZM368 282H369V358H368ZM369 322H370V358H369ZM370 281H371V358H370ZM371 353H372V358H371ZM372 350H373V358H372ZM373 352H374V358H373ZM374 354H375V358H374ZM375 353H376V358H375ZM376 352H377V358H376ZM377 232H378V358H377ZM378 257H379V358H378ZM379 326H380V358H379ZM380 354H381V358H380ZM381 351H382V358H381ZM382 350H383V358H382ZM383 351H384V358H383ZM384 352H385V358H384ZM385 217H386V358H385ZM386 333H387V358H386ZM387 273H388V358H387ZM388 326H389V358H388ZM389 352H390V358H389ZM390 354H391V358H390ZM391 351H392V358H391ZM392 352H393V358H392ZM393 353H394V358H393ZM394 197H395V358H394ZM395 351H396V358H395ZM396 352H398V358H396ZM398 350H399V358H398ZM399 352H400V358H399ZM400 350H402V358H400ZM402 338H403V358H402ZM403 251H404V358H403ZM404 354H405V358H404ZM405 351H406V358H405ZM406 354H407V358H406ZM407 353H408V358H407ZM408 351H409V358H408ZM409 353H410V358H409ZM410 350H411V358H410ZM411 261H412V358H411ZM412 333H413V358H412ZM413 240H414V358H413ZM414 353H415V358H414ZM415 354H416V358H415ZM416 352H417V358H416ZM417 351H419V358H417ZM419 352H420V358H419ZM420 259H421V358H420ZM421 339H422V358H421ZM422 252H423V358H422ZM423 329H424V358H423ZM424 350H425V358H424ZM425 351H426V358H425ZM426 350H428V358H426ZM428 352H429V358H428ZM429 264H430V358H429ZM430 351H431V358H430ZM431 350H433V358H431ZM433 353H434V358H433ZM434 354H435V358H434ZM435 352H436V358H435ZM436 354H437V358H436ZM437 340H438V358H437ZM438 267H439V358H438ZM439 350H440V358H439ZM440 353H441V358H440ZM441 351H443V358H441ZM443 352H444V358H443ZM444 353H445V358H444ZM445 350H446V358H445ZM446 274H447V358H446ZM447 334H448V358H447ZM448 243H449V358H448ZM449 325H450V358H449ZM450 352H451V358H450ZM451 351H452V358H451ZM452 350H453V358H452ZM453 352H454V358H453ZM454 351H455V358H454ZM455 290H456V358H455ZM456 323H457V358H456ZM457 287H458V358H457ZM458 330H459V358H458ZM459 353H460V358H459ZM460 350H461V358H460ZM461 353H462V358H461ZM462 352H463V358H462ZM463 354H464V358H463ZM464 251H465V358H464ZM465 292H466V358H465ZM466 323H467V358H466ZM467 350H469V358H467ZM469 352H470V358H469ZM470 350H471V358H470ZM471 351H472V358H471ZM472 308H473V358H472ZM473 354H474V358H473ZM474 266H475V358H474ZM475 333H476V358H475ZM476 350H477V358H476ZM477 352H479V358H477ZM479 351H480V358H479ZM480 350H481V358H480ZM481 331H482V358H481ZM482 354H483V358H482ZM483 285H484V358H483ZM484 324H485V358H484ZM485 353H486V358H485ZM486 352H487V358H486ZM487 353H488V358H487ZM488 351H489V358H488ZM489 352H490V358H489ZM490 325H491V358H490ZM491 330H492V358H491ZM492 350H493V358H492ZM493 354H494V358H493ZM494 353H495V358H494ZM495 354H496V358H495ZM496 351H497V358H496ZM497 354H498V358H497ZM498 329H499V358H498ZM499 354H500V358H499ZM500 287H501V358H500ZM501 354H502V358H501ZM502 351H503V358H502ZM503 350H506V358H503ZM506 351H507V358H506ZM507 333H508V358H507ZM508 350H509V358H508ZM509 266H510V358H509ZM510 353H511V358H510ZM511 354H512V358H511ZM512 350H514V358H512ZM514 354H515V358H514ZM515 351H516V358H515ZM516 326H517V358H516ZM517 270H518V358H517ZM518 350H519V358H518ZM519 353H520V358H519ZM520 350H521V358H520ZM521 354H523V358H521ZM523 350H524V358H523ZM524 354H525V358H524ZM525 329H526V358H525ZM526 272H527V358H526ZM527 331H528V358H527ZM528 350H529V358H528ZM529 352H530V358H529ZM530 351H533V358H530ZM533 309H534V358H533ZM534 338H535V358H534ZM535 252H536V358H535ZM536 350H537V358H536ZM537 353H538V358H537ZM538 352H539V358H538ZM539 350H540V358H539ZM540 354H541V358H540ZM541 344H542V358H541ZM542 289H543V358H542ZM543 325H544V358H543ZM544 351H545V358H544ZM545 352H548V358H545ZM548 354H550V358H548ZM550 338H551V358H550ZM551 278H553V358H551ZM553 325H554V358H553ZM554 353H555V358H554ZM555 352H556V358H555ZM556 350H557V358H556ZM557 351H558V358H557ZM558 353H559V358H558ZM559 292H560V358H559ZM560 329H561V358H560ZM561 282H562V358H561ZM562 329H563V358H562ZM563 353H565V358H563ZM565 350H566V358H565ZM566 354H567V358H566ZM567 351H568V358H567ZM568 273H569V358H568ZM569 329H570V358H569ZM570 267H571V358H570ZM571 326H572V358H571ZM572 352H573V358H572ZM573 353H574V358H573ZM574 350H575V358H574ZM575 354H576V358H575ZM576 336H577V358H576ZM577 253H578V358H577ZM578 300H579V358H578ZM579 351H581V358H579ZM581 350H582V358H581ZM582 354H583V358H582ZM583 350H584V358H583ZM584 351H585V358H584ZM585 261H586V358H585ZM586 324H587V358H586ZM587 253H588V358H587ZM588 334H589V358H588ZM589 354H591V358H589ZM591 352H592V358H591ZM592 350H593V358H592ZM593 352H594V358H593ZM594 332H595V358H594ZM595 353H596V358H595ZM596 250H597V358H596ZM597 332H598V358H597ZM598 350H599V358H598ZM599 351H600V358H599ZM600 350H601V358H600ZM601 353H602V358H601ZM602 340H603V358H602ZM603 210H604V358H603ZM604 352H605V358H604ZM605 300H606V358H605ZM606 353H607V358H606ZM607 352H608V358H607ZM608 353H609V358H608ZM609 352H610V358H609ZM610 350H611V358H610ZM611 339H612V358H611ZM612 179H613V358H612ZM613 260H614V358H613ZM614 333H615V358H614ZM615 353H616V358H615ZM616 350H617V358H616ZM617 351H618V358H617ZM618 350H619V358H618ZM619 352H620V358H619ZM620 136H621V358H620ZM621 322H622V358H621ZM622 254H623V358H622ZM623 327H624V358H623ZM624 353H625V358H624ZM625 354H626V358H625ZM626 350H627V358H626ZM627 352H628V358H627ZM628 353H629V358H628ZM629 288H630V358H629ZM630 322H631V358H630ZM631 255H632V358H631ZM632 323H633V358H632ZM633 350H634V358H633ZM634 352H635V358H634ZM635 351H637V358H635ZM637 352H638V358H637ZM638 353H639V358H638ZM639 287H640V358H639ZM640 352H641V358H640ZM641 351H642V358H641ZM642 352H643V358H642ZM643 353H644V358H643ZM644 350H645V358H644ZM645 353H646V358H645ZM646 300H647V358H646ZM647 337H648V358H647ZM648 261H649V358H648ZM649 330H650V358H649ZM650 350H651V358H650ZM651 353H653V358H651ZM653 354H654V358H653ZM654 351H655V358H654ZM655 324H656V358H655ZM656 353H657V358H656ZM657 240H658V358H657ZM658 326H659V358H658ZM659 351H661V358H659ZM661 353H663V358H661ZM663 352H664V358H663ZM664 267H665V358H664ZM665 326H666V358H665ZM666 314H667V358H666ZM667 352H668V358H667ZM668 353H669V358H668ZM669 351H670V358H669ZM670 352H671V358H670ZM671 353H672V358H671ZM672 293H673V358H672ZM673 155H674V358H673ZM674 328H675V358H674ZM675 351H677V358H675ZM677 350H678V358H677ZM678 351H679V358H678ZM679 354H680V358H679ZM680 341H681V358H680ZM681 269H682V358H681ZM682 351H683V358H682ZM683 250H684V358H683ZM684 322H685V358H684ZM685 353H687V358H685ZM687 351H688V358H687ZM688 354H689V358H688ZM689 351H690V358H689ZM690 217H691V358H690ZM691 323H692V358H691ZM692 237H693V358H692ZM693 327H694V358H693ZM694 354H695V358H694ZM695 350H696V358H695ZM696 352H697V358H696ZM697 351H698V358H697ZM698 337H699V358H698ZM699 246H700V358H699ZM700 322H701V358H700ZM701 351H702V358H701ZM702 350H703V358H702ZM703 353H706V358H703ZM706 354H707V358H706ZM707 351H708V358H707ZM708 353H709V358H708ZM709 352H710V358H709ZM710 188H711V358H710ZM711 350H712V358H711ZM712 353H713V358H712ZM713 352H714V358H713ZM714 354H715V358H714ZM715 352H716V358H715ZM716 353H718V358H716ZM718 355H724V358H718ZM724 354H725V358H724ZM725 347H726V358H725ZM726 355H729V358H726ZM729 354H730V358H729ZM730 355H734V358H730ZM734 337H735V358H734ZM735 355H739V358H735ZM739 354H740V358H739ZM740 353H742V358H740ZM742 355H746V358H742ZM746 354H747V358H746ZM747 355H748V358H747ZM748 342H749V358H748ZM749 355H750V358H749ZM750 354H751V358H750ZM751 355H753V358H751ZM753 319H754V358H753ZM754 355H756V358H754ZM756 354H757V358H756ZM757 283H758V358H757ZM758 320H759V358H758ZM759 355H764V358H759ZM764 354H765V358H764ZM765 355H767V358H765ZM767 354H768V358H767ZM768 355H770V358H768ZM770 353H771V358H770ZM771 355H774V358H771ZM774 354H775V358H774ZM775 355H778V358H775ZM778 354H779V358H778ZM779 355H796V358H779ZM796 354H797V358H796ZM797 353H798V358H797ZM798 355H799V358H798ZM799 353H800V358H799ZM800 355H803V358H800ZM803 347H804V358H803ZM804 355H805V358H804ZM805 353H806V358H805ZM806 355H811V358H806ZM811 354H812V358H811ZM812 355H815V358H812ZM815 353H816V358H815ZM816 355H819V358H816ZM819 353H820V358H819ZM820 355H824V358H820ZM824 354H825V358H824Z" fill="#ffffff"/><rect x="342" y="358" width="373" height="12" fill="#66ff00"/><path d="M45 601h1V611h-1ZM46 600h1V611h-1ZM47 604h1V611h-1ZM48 597h1V611h-1ZM49 604h1V611h-1ZM50 604h1V611h-1ZM51 596h1V611h-1ZM52 599h1V611h-1ZM53 604h1V611h-1ZM54 605h1V611h-1ZM55 601h1V611h-1ZM56 600h1V611h-1ZM57 600h1V611h-1ZM58 601h1V611h-1ZM59 602h1V611h-1ZM60 604h1V611h-1ZM61 604h1V611h-1ZM62 604h1V611h-1ZM63 599h1V611h-1ZM64 604h1V611h-1ZM65 604h1V611h-1ZM66 604h1V611h-1ZM67 603h1V611h-1ZM68 603h1V611h-1ZM69 603h1V611h-1ZM70 604h1V611h-1ZM71 603h1V611h-1ZM72 604h1V611h-1ZM73 603h1V611h-1ZM74 602h1V611h-1ZM75 598h1V611h-1ZM76 603h1V611h-1ZM77 592h1V611h-1ZM78 604h1V611h-1ZM79 601h1V611h-1ZM80 605h1V611h-1ZM81 603h1V611h-1ZM82 603h1V611h-1ZM83 598h1V611h-1ZM84 604h1V611h-1ZM85 604h1V611h-1ZM86 598h1V611h-1ZM87 597h1V611h-1ZM88 605h1V611h-1ZM89 601h1V611h-1ZM90 604h1V611h-1ZM91 598h1V611h-1ZM92 602h1V611h-1ZM93 594h1V611h-1ZM94 605h1V611h-1ZM95 593h1V611h-1ZM96 605h1V611h-1ZM97 600h1V611h-1ZM98 602h1V611h-1ZM99 604h1V611h-1ZM100 591h1V611h-1ZM101 591h1V611h-1ZM102 587h1V611h-1ZM103 602h1V611h-1ZM104 601h1V611h-1ZM105 596h1V611h-1ZM106 598h1V611h-1ZM107 604h1V611h-1ZM108 592h1V611h-1ZM109 591h1V611h-1ZM110 601h1V611h-1ZM111 604h1V611h-1ZM112 605h1V611h-1ZM113 600h1V611h-1ZM114 593h1V611h-1ZM115 597h1V611h-1ZM116 602h1V611h-1ZM117 603h1V611h-1ZM118 601h1V611h-1ZM119 602h1V611h-1ZM120 603h1V611h-1ZM121 585h1V611h-1ZM122 598h1V611h-1ZM123 604h1V611h-1ZM124 585h1V611h-1ZM125 593h1V611h-1ZM126 603h1V611h-1ZM127 600h1V611h-1ZM128 603h1V611h-1ZM129 596h1V611h-1ZM130 602h1V611h-1ZM131 593h1V611h-1ZM132 602h1V611h-1ZM133 600h1V611h-1ZM134 596h1V611h-1ZM135 596h1V611h-1ZM136 585h1V611h-1ZM137 594h1V611h-1ZM138 589h1V611h-1ZM139 605h1V611h-1ZM140 603h1V611h-1ZM141 593h1V611h-1ZM142 596h1V611h-1ZM143 601h1V611h-1ZM144 604h1V611h-1ZM145 596h1V611h-1ZM146 601h1V611h-1ZM147 595h1V611h-1ZM148 592h1V611h-1ZM149 595h1V611h-1ZM150 603h1V611h-1ZM151 599h1V611h-1ZM152 602h1V611h-1ZM153 604h1V611h-1ZM154 598h1V611h-1ZM155 600h1V611h-1ZM156 602h1V611h-1ZM157 599h1V611h-1ZM158 603h1V611h-1ZM172 600h1V611h-1ZM173 603h1V611h-1ZM174 603h1V611h-1ZM175 593h1V611h-1ZM176 601h1V611h-1ZM177 604h1V611h-1ZM178 604h1V611h-1ZM179 603h1V611h-1ZM180 598h1V611h-1ZM181 601h1V611h-1ZM182 598h1V611h-1ZM183 603h1V611h-1ZM184 595h1V611h-1ZM185 590h1V611h-1ZM186 602h1V611h-1ZM187 603h1V611h-1ZM188 603h1V611h-1ZM189 601h1V611h-1ZM190 590h1V611h-1ZM191 599h1V611h-1ZM192 599h1V611h-1ZM193 598h1V611h-1ZM194 597h1V611h-1ZM195 603h1V611h-1ZM196 585h1V611h-1ZM197 604h1V611h-1ZM198 600h1V611h-1ZM199 602h1V611h-1ZM200 599h1V611h-1ZM201 592h1V611h-1ZM202 603h1V611h-1ZM203 590h1V611h-1ZM204 603h1V611h-1ZM205 599h1V611h-1ZM206 592h1V611h-1ZM207 595h1V611h-1ZM208 596h1V611h-1ZM209 602h1V611h-1ZM210 589h1V611h-1ZM211 592h1V611h-1ZM212 602h1V611h-1ZM213 605h1V611h-1ZM214 595h1V611h-1ZM215 603h1V611h-1ZM216 594h1V611h-1ZM217 594h1V611h-1ZM218 598h1V611h-1ZM219 592h1V611h-1ZM220 596h1V611h-1ZM221 602h1V611h-1ZM222 601h1V611h-1ZM223 603h1V611h-1ZM224 598h1V611h-1ZM225 596h1V611h-1ZM226 604h1V611h-1ZM227 603h1V611h-1ZM228 603h1V611h-1ZM229 596h1V611h-1ZM230 598h1V611h-1ZM231 601h1V611h-1ZM232 594h1V611h-1ZM233 602h1V611h-1ZM234 603h1V611h-1ZM235 601h1V611h-1ZM236 604h1V611h-1ZM237 600h1V611h-1ZM238 598h1V611h-1ZM239 591h1V611h-1ZM240 596h1V611h-1ZM241 595h1V611h-1ZM242 598h1V611h-1ZM243 600h1V611h-1ZM244 600h1V611h-1ZM245 597h1V611h-1ZM246 586h1V611h-1ZM247 604h1V611h-1ZM248 585h1V611h-1ZM249 601h1V611h-1ZM250 593h1V611h-1ZM251 596h1V611h-1ZM252 602h1V611h-1ZM253 602h1V611h-1ZM254 595h1V611h-1ZM255 598h1V611h-1ZM256 604h1V611h-1ZM257 597h1V611h-1ZM258 601h1V611h-1ZM259 603h1V611h-1ZM260 589h1V611h-1ZM261 600h1V611h-1ZM262 594h1V611h-1ZM263 601h1V611h-1ZM264 589h1V611h-1ZM265 600h1V611h-1ZM266 604h1V611h-1ZM267 597h1V611h-1ZM268 592h1V611h-1ZM269 603h1V611h-1ZM270 578h1V611h-1ZM271 590h1V611h-1ZM272 602h1V611h-1ZM273 601h1V611h-1ZM274 601h1V611h-1ZM275 591h1V611h-1ZM276 602h1V611h-1ZM277 602h1V611h-1ZM278 601h1V611h-1ZM279 600h1V611h-1ZM280 603h1V611h-1ZM281 603h1V611h-1ZM282 604h1V611h-1ZM283 597h1V611h-1ZM284 597h1V611h-1ZM285 589h1V611h-1ZM286 604h1V611h-1ZM287 603h1V611h-1ZM288 594h1V611h-1ZM289 603h1V611h-1ZM290 598h1V611h-1ZM291 600h1V611h-1ZM292 599h1V611h-1ZM293 590h1V611h-1ZM294 585h1V611h-1ZM295 598h1V611h-1ZM296 600h1V611h-1ZM297 588h1V611h-1ZM298 601h1V611h-1ZM299 603h1V611h-1ZM300 602h1V611h-1ZM301 604h1V611h-1ZM302 604h1V611h-1ZM303 604h1V611h-1ZM304 581h1V611h-1ZM305 603h1V611h-1ZM306 602h1V611h-1ZM307 596h1V611h-1ZM308 603h1V611h-1ZM309 603h1V611h-1ZM310 601h1V611h-1ZM311 602h1V611h-1ZM312 597h1V611h-1ZM313 599h1V611h-1ZM314 604h1V611h-1ZM315 598h1V611h-1ZM316 602h1V611h-1ZM317 593h1V611h-1ZM318 604h1V611h-1ZM319 601h1V611h-1ZM320 590h1V611h-1ZM321 601h1V611h-1ZM322 594h1V611h-1ZM323 602h1V611h-1ZM324 603h1V611h-1ZM325 604h1V611h-1ZM326 604h1V611h-1ZM327 598h1V611h-1ZM328 597h1V611h-1ZM329 603h1V611h-1ZM330 601h1V611h-1ZM331 604h1V611h-1ZM332 597h1V611h-1ZM333 600h1V611h-1ZM334 576h1V611h-1ZM335 597h1V611h-1ZM336 604h1V611h-1ZM337 595h1V611h-1ZM338 604h1V611h-1ZM339 594h1V611h-1ZM340 600h1V611h-1ZM341 601h1V611h-1ZM342 600h1V611h-1ZM343 602h1V611h-1ZM344 588h1V611h-1ZM345 589h1V611h-1ZM346 592h1V611h-1ZM347 603h1V611h-1ZM348 604h1V611h-1ZM349 600h1V611h-1ZM350 598h1V611h-1ZM351 585h1V611h-1ZM352 600h1V611h-1ZM353 600h1V611h-1ZM354 593h1V611h-1ZM355 604h1V611h-1ZM356 601h1V611h-1ZM357 603h1V611h-1ZM358 598h1V611h-1ZM359 603h1V611h-1ZM360 601h1V611h-1ZM361 603h1V611h-1ZM362 589h1V611h-1ZM363 603h1V611h-1ZM364 594h1V611h-1ZM365 604h1V611h-1ZM366 596h1V611h-1ZM367 601h1V611h-1ZM368 600h1V611h-1ZM369 603h1V611h-1ZM370 603h1V611h-1ZM371 595h1V611h-1ZM372 594h1V611h-1ZM373 585h1V611h-1ZM374 585h1V611h-1ZM375 576h1V611h-1ZM376 585h1V611h-1ZM377 595h1V611h-1ZM378 590h1V611h-1ZM379 590h1V611h-1ZM380 600h1V611h-1ZM381 602h1V611h-1ZM382 603h1V611h-1ZM383 596h1V611h-1ZM384 597h1V611h-1ZM385 596h1V611h-1ZM386 598h1V611h-1ZM387 594h1V611h-1ZM388 586h1V611h-1ZM389 598h1V611h-1ZM390 585h1V611h-1ZM391 600h1V611h-1ZM392 596h1V611h-1ZM393 597h1V611h-1ZM394 599h1V611h-1ZM395 588h1V611h-1ZM396 588h1V611h-1ZM397 595h1V611h-1ZM398 603h1V611h-1ZM399 598h1V611h-1ZM400 604h1V611h-1ZM401 597h1V611h-1ZM402 601h1V611h-1ZM403 592h1V611h-1ZM404 599h1V611h-1ZM405 602h1V611h-1ZM406 596h1V611h-1ZM407 603h1V611h-1ZM408 603h1V611h-1ZM409 602h1V611h-1ZM410 600h1V611h-1ZM411 595h1V611h-1ZM412 604h1V611h-1ZM413 601h1V611h-1ZM414 598h1V611h-1ZM415 601h1V611h-1ZM416 598h1V611h-1ZM417 582h1V611h-1ZM418 602h1V611h-1ZM419 602h1V611h-1ZM420 588h1V611h-1ZM421 590h1V611h-1ZM422 599h1V611h-1ZM423 602h1V611h-1ZM424 603h1V611h-1ZM425 592h1V611h-1ZM426 600h1V611h-1ZM427 602h1V611h-1ZM428 601h1V611h-1ZM429 603h1V611h-1ZM430 599h1V611h-1ZM431 597h1V611h-1ZM432 594h1V611h-1ZM433 602h1V611h-1ZM434 603h1V611h-1ZM435 601h1V611h-1ZM436 602h1V611h-1ZM437 598h1V611h-1ZM438 600h1V611h-1ZM439 597h1V611h-1ZM440 596h1V611h-1ZM441 600h1V611h-1ZM442 597h1V611h-1ZM443 590h1V611h-1ZM444 594h1V611h-1ZM445 599h1V611h-1ZM446 585h1V611h-1ZM447 602h1V611h-1ZM448 602h1V611h-1ZM449 597h1V611h-1ZM450 594h1V611h-1ZM451 595h1V611h-1ZM452 604h1V611h-1ZM453 599h1V611h-1ZM454 601h1V611h-1ZM455 604h1V611h-1ZM456 595h1V611h-1ZM457 603h1V611h-1ZM458 604h1V611h-1ZM459 593h1V611h-1ZM460 583h1V611h-1ZM461 603h1V611h-1ZM462 602h1V611h-1ZM463 602h1V611h-1ZM464 585h1V611h-1ZM465 603h1V611h-1ZM466 599h1V611h-1ZM467 596h1V611h-1ZM468 597h1V611h-1ZM469 598h1V611h-1ZM470 598h1V611h-1ZM471 604h1V611h-1ZM472 585h1V611h-1ZM473 602h1V611h-1ZM474 595h1V611h-1ZM475 598h1V611h-1ZM476 600h1V611h-1ZM477 604h1V611h-1ZM478 600h1V611h-1ZM479 599h1V611h-1ZM480 600h1V611h-1ZM481 602h1V611h-1ZM482 602h1V611h-1ZM483 603h1V611h-1ZM484 602h1V611h-1ZM485 601h1V611h-1ZM486 600h1V611h-1ZM487 590h1V611h-1ZM488 602h1V611h-1ZM489 599h1V611h-1ZM490 600h1V611h-1ZM491 585h1V611h-1ZM492 601h1V611h-1ZM493 603h1V611h-1ZM494 600h1V611h-1ZM495 597h1V611h-1ZM496 599h1V611h-1ZM497 601h1V611h-1ZM498 596h1V611h-1ZM499 588h1V611h-1ZM500 587h1V611h-1ZM501 603h1V611h-1ZM502 601h1V611h-1ZM503 599h1V611h-1ZM504 601h1V611h-1ZM505 604h1V611h-1ZM506 595h1V611h-1ZM507 591h1V611h-1ZM508 602h1V611h-1ZM509 591h1V611h-1ZM510 592h1V611h-1ZM511 599h1V611h-1ZM512 603h1V611h-1ZM513 600h1V611h-1ZM514 601h1V611h-1ZM515 585h1V611h-1ZM516 602h1V611h-1ZM517 600h1V611h-1ZM518 603h1V611h-1ZM519 589h1V611h-1ZM520 599h1V611h-1ZM521 603h1V611h-1ZM522 604h1V611h-1ZM523 594h1V611h-1ZM524 600h1V611h-1ZM525 604h1V611h-1ZM526 601h1V611h-1ZM527 602h1V611h-1ZM528 593h1V611h-1ZM529 600h1V611h-1ZM530 592h1V611h-1ZM531 599h1V611h-1ZM532 601h1V611h-1ZM533 603h1V611h-1ZM534 601h1V611h-1ZM535 602h1V611h-1ZM536 590h1V611h-1ZM537 604h1V611h-1ZM538 599h1V611h-1ZM539 597h1V611h-1ZM540 595h1V611h-1ZM541 595h1V611h-1ZM542 600h1V611h-1ZM543 600h1V611h-1ZM544 589h1V611h-1ZM545 602h1V611h-1ZM546 597h1V611h-1ZM547 600h1V611h-1ZM548 585h1V611h-1ZM549 601h1V611h-1ZM550 600h1V611h-1ZM551 596h1V611h-1ZM552 603h1V611h-1ZM553 603h1V611h-1ZM554 602h1V611h-1ZM555 601h1V611h-1ZM556 587h1V611h-1ZM557 600h1V611h-1ZM558 583h1V611h-1ZM559 595h1V611h-1ZM560 588h1V611h-1ZM561 585h1V611h-1ZM562 603h1V611h-1ZM563 590h1V611h-1ZM564 594h1V611h-1ZM565 589h1V611h-1ZM566 592h1V611h-1ZM567 603h1V611h-1ZM568 601h1V611h-1ZM569 595h1V611h-1ZM570 599h1V611h-1ZM571 585h1V611h-1ZM572 601h1V611h-1ZM573 592h1V611h-1ZM574 587h1V611h-1ZM575 596h1V611h-1ZM576 592h1V611h-1ZM577 589h1V611h-1ZM578 601h1V611h-1ZM579 597h1V611h-1ZM580 588h1V611h-1ZM581 600h1V611h-1ZM582 590h1V611h-1ZM583 582h1V611h-1ZM584 572h1V611h-1ZM585 555h1V611h-1ZM586 572h1V611h-1ZM587 582h1V611h-1ZM588 590h1V611h-1ZM589 599h1V611h-1ZM590 588h1V611h-1ZM591 585h1V611h-1ZM592 598h1V611h-1ZM593 585h1V611h-1ZM594 586h1V611h-1ZM595 593h1V611h-1ZM596 599h1V611h-1ZM597 590h1V611h-1ZM598 599h1V611h-1ZM599 600h1V611h-1ZM600 603h1V611h-1ZM601 585h1V611h-1ZM602 589h1V611h-1ZM603 600h1V611h-1ZM604 604h1V611h-1ZM605 599h1V611h-1ZM606 595h1V611h-1ZM607 602h1V611h-1ZM608 600h1V611h-1ZM609 603h1V611h-1ZM610 598h1V611h-1ZM611 601h1V611h-1ZM612 601h1V611h-1ZM613 602h1V611h-1ZM614 591h1V611h-1ZM615 591h1V611h-1ZM616 592h1V611h-1ZM617 596h1V611h-1ZM618 603h1V611h-1ZM619 588h1V611h-1ZM620 590h1V611h-1ZM621 599h1V611h-1ZM622 593h1V611h-1ZM623 596h1V611h-1ZM624 592h1V611h-1ZM625 593h1V611h-1ZM626 597h1V611h-1ZM627 585h1V611h-1ZM628 599h1V611h-1ZM629 603h1V611h-1ZM630 596h1V611h-1ZM631 601h1V611h-1ZM632 597h1V611h-1ZM633 601h1V611h-1ZM634 603h1V611h-1ZM635 601h1V611h-1ZM636 595h1V611h-1ZM637 599h1V611h-1ZM638 603h1V611h-1ZM639 599h1V611h-1ZM640 592h1V611h-1ZM641 603h1V611h-1ZM642 602h1V611h-1ZM643 602h1V611h-1ZM644 598h1V611h-1ZM645 600h1V611h-1ZM646 591h1V611h-1ZM647 592h1V611h-1ZM648 587h1V611h-1ZM649 599h1V611h-1ZM650 585h1V611h-1ZM651 600h1V611h-1ZM652 602h1V611h-1ZM653 597h1V611h-1ZM654 597h1V611h-1ZM655 594h1V611h-1ZM656 599h1V611h-1ZM657 601h1V611h-1ZM658 600h1V611h-1ZM659 600h1V611h-1ZM660 585h1V611h-1ZM661 585h1V611h-1ZM662 596h1V611h-1ZM663 597h1V611h-1ZM664 596h1V611h-1ZM665 600h1V611h-1ZM666 587h1V611h-1ZM667 597h1V611h-1ZM668 597h1V611h-1ZM669 585h1V611h-1ZM670 592h1V611h-1ZM671 603h1V611h-1ZM672 603h1V611h-1ZM673 599h1V611h-1ZM674 589h1V611h-1ZM675 603h1V611h-1ZM676 597h1V611h-1ZM677 597h1V611h-1ZM678 589h1V611h-1ZM679 587h1V611h-1ZM680 603h1V611h-1ZM681 598h1V611h-1ZM682 601h1V611h-1ZM683 601h1V611h-1ZM684 602h1V611h-1ZM685 602h1V611h-1ZM686 591h1V611h-1ZM687 601h1V611h-1ZM688 585h1V611h-1ZM689 602h1V611h-1ZM690 604h1V611h-1ZM691 603h1V611h-1ZM692 594h1V611h-1ZM693 602h1V611h-1ZM694 600h1V611h-1ZM695 602h1V611h-1ZM696 594h1V611h-1ZM697 597h1V611h-1ZM698 581h1V611h-1ZM699 591h1V611h-1ZM700 597h1V611h-1ZM701 585h1V611h-1ZM702 602h1V611h-1ZM703 585h1V611h-1ZM704 602h1V611h-1ZM705 600h1V611h-1ZM706 590h1V611h-1ZM707 603h1V611h-1ZM708 603h1V611h-1ZM709 602h1V611h-1ZM710 583h1V611h-1ZM711 589h1V611h-1ZM712 596h1V611h-1ZM713 598h1V611h-1ZM714 599h1V611h-1ZM715 596h1V611h-1ZM716 597h1V611h-1ZM717 603h1V611h-1ZM718 603h1V611h-1ZM719 593h1V611h-1ZM720 598h1V611h-1ZM721 595h1V611h-1ZM722 585h1V611h-1ZM723 585h1V611h-1ZM724 572h1V611h-1ZM725 597h1V611h-1ZM726 596h1V611h-1ZM727 586h1V611h-1ZM728 598h1V611h-1ZM729 591h1V611h-1ZM730 599h1V611h-1ZM731 599h1V611h-1ZM732 602h1V611h-1ZM733 599h1V611h-1ZM734 585h1V611h-1ZM735 603h1V611h-1ZM736 603h1V611h-1ZM737 593h1V611h-1ZM738 585h1V611h-1ZM739 576h1V611h-1ZM740 597h1V611h-1ZM741 602h1V611h-1ZM742 602h1V611h-1ZM743 588h1V611h-1ZM744 600h1V611h-1ZM745 593h1V611h-1ZM746 601h1V611h-1ZM747 594h1V611h-1ZM748 602h1V611h-1ZM749 596h1V611h-1ZM750 597h1V611h-1ZM751 588h1V611h-1ZM752 581h1V611h-1ZM753 598h1V611h-1ZM754 602h1V611h-1ZM755 602h1V611h-1ZM756 601h1V611h-1ZM757 602h1V611h-1ZM758 591h1V611h-1ZM759 598h1V611h-1ZM760 591h1V611h-1ZM761 585h1V611h-1ZM762 600h1V611h-1ZM763 590h1V611h-1ZM764 603h1V611h-1ZM765 597h1V611h-1ZM766 574h1V611h-1ZM767 591h1V611h-1ZM768 594h1V611h-1ZM769 599h1V611h-1ZM770 603h1V611h-1ZM771 592h1V611h-1ZM772 599h1V611h-1ZM773 601h1V611h-1ZM774 591h1V611h-1ZM775 585h1V611h-1ZM776 586h1V611h-1ZM777 600h1V611h-1ZM778 594h1V611h-1ZM779 600h1V611h-1ZM780 602h1V611h-1ZM781 600h1V611h-1ZM782 600h1V611h-1ZM783 591h1V611h-1ZM784 585h1V611h-1ZM785 587h1V611h-1ZM786 603h1V611h-1ZM787 597h1V611h-1ZM788 600h1V611h-1ZM789 596h1V611h-1ZM790 588h1V611h-1ZM791 599h1V611h-1ZM792 580h1V611h-1ZM793 562h1V611h-1ZM794 580h1V611h-1ZM795 590h1V611h-1ZM796 590h1V611h-1ZM797 591h1V611h-1ZM798 593h1V611h-1ZM799 585h1V611h-1ZM800 594h1V611h-1ZM801 595h1V611h-1ZM802 602h1V611h-1ZM803 599h1V611h-1ZM804 585h1V611h-1ZM805 603h1V611h-1ZM806 592h1V611h-1ZM807 591h1V611h-1ZM808 594h1V611h-1ZM809 585h1V611h-1ZM810 594h1V611h-1ZM811 585h1V611h-1ZM812 585h1V611h-1ZM813 599h1V611h-1ZM814 603h1V611h-1ZM815 600h1V611h-1ZM816 594h1V611h-1ZM817 587h1V611h-1ZM818 601h1V611h-1ZM819 600h1V611h-1ZM820 601h1V611h-1ZM821 600h1V611h-1ZM822 600h1V611h-1ZM823 601h1V611h-1ZM824 599h1V611h-1Z" fill="#ffffff"/><path d="M165 452h1v15h1v70h-2v-70h1z" fill="#fff"/><path d="M164 536 L163 558 L161 594 L159 602 H172 L170.5 594 L167 558 L166.5 536 Z" fill="#fff" shape-rendering="auto"/><path d="M165.6 582 L163.2 602 H168.2 Z" fill="#000" shape-rendering="auto"/><rect x="159" y="602" width="1" height="1" fill="#fff"/><rect x="160" y="595" width="1" height="8" fill="#fff"/><rect x="171" y="585" width="1" height="18" fill="#fff"/><path d="M49 610h1v1h-1ZM51 610h1v1h-1ZM52 610h1v1h-1ZM60 610h1v1h-1ZM66 610h1v1h-1ZM71 610h1v1h-1ZM74 610h1v1h-1ZM76 610h1v1h-1ZM77 610h1v1h-1ZM83 610h1v1h-1ZM86 610h1v1h-1ZM87 610h1v1h-1ZM94 610h1v1h-1ZM95 610h1v1h-1ZM97 610h1v1h-1ZM98 610h1v1h-1ZM100 610h1v1h-1ZM102 610h1v1h-1ZM103 610h1v1h-1ZM110 610h1v1h-1ZM111 610h1v1h-1ZM112 610h1v1h-1ZM117 610h1v1h-1ZM120 610h1v1h-1ZM127 610h1v1h-1ZM130 610h1v1h-1ZM133 610h1v1h-1ZM134 610h1v1h-1ZM135 610h1v1h-1ZM137 610h1v1h-1ZM138 610h1v1h-1ZM139 610h1v1h-1ZM144 610h1v1h-1ZM145 610h1v1h-1ZM147 610h1v1h-1ZM148 610h1v1h-1ZM162 610h1v1h-1ZM166 610h1v1h-1ZM169 610h1v1h-1ZM170 610h1v1h-1ZM172 610h1v1h-1ZM174 610h1v1h-1ZM176 610h1v1h-1ZM177 610h1v1h-1ZM185 610h1v1h-1ZM187 610h1v1h-1ZM191 610h1v1h-1ZM196 610h1v1h-1ZM198 610h1v1h-1ZM200 610h1v1h-1ZM203 610h1v1h-1ZM211 610h1v1h-1ZM215 610h1v1h-1ZM216 610h1v1h-1ZM226 610h1v1h-1ZM229 610h1v1h-1ZM231 610h1v1h-1ZM239 610h1v1h-1ZM241 610h1v1h-1ZM245 610h1v1h-1ZM250 610h1v1h-1ZM252 610h1v1h-1ZM263 610h1v1h-1ZM264 610h1v1h-1ZM266 610h1v1h-1ZM272 610h1v1h-1ZM273 610h1v1h-1ZM280 610h1v1h-1ZM286 610h1v1h-1ZM289 610h1v1h-1ZM294 610h1v1h-1ZM295 610h1v1h-1ZM297 610h1v1h-1ZM299 610h1v1h-1ZM300 610h1v1h-1ZM307 610h1v1h-1ZM310 610h1v1h-1ZM318 610h1v1h-1ZM322 610h1v1h-1ZM324 610h1v1h-1ZM325 610h1v1h-1ZM327 610h1v1h-1ZM336 610h1v1h-1ZM340 610h1v1h-1ZM341 610h1v1h-1ZM342 610h1v1h-1ZM345 610h1v1h-1ZM353 610h1v1h-1ZM355 610h1v1h-1ZM356 610h1v1h-1ZM358 610h1v1h-1ZM359 610h1v1h-1ZM362 610h1v1h-1ZM369 610h1v1h-1ZM371 610h1v1h-1ZM377 610h1v1h-1ZM400 610h1v1h-1ZM407 610h1v1h-1ZM413 610h1v1h-1ZM416 610h1v1h-1ZM418 610h1v1h-1ZM421 610h1v1h-1ZM423 610h1v1h-1ZM433 610h1v1h-1ZM438 610h1v1h-1ZM443 610h1v1h-1ZM447 610h1v1h-1ZM451 610h1v1h-1ZM454 610h1v1h-1ZM463 610h1v1h-1ZM469 610h1v1h-1ZM472 610h1v1h-1ZM475 610h1v1h-1ZM479 610h1v1h-1ZM480 610h1v1h-1ZM481 610h1v1h-1ZM482 610h1v1h-1ZM485 610h1v1h-1ZM488 610h1v1h-1ZM491 610h1v1h-1ZM496 610h1v1h-1ZM504 610h1v1h-1ZM505 610h1v1h-1ZM507 610h1v1h-1ZM515 610h1v1h-1ZM518 610h1v1h-1ZM521 610h1v1h-1ZM523 610h1v1h-1ZM525 610h1v1h-1ZM527 610h1v1h-1ZM531 610h1v1h-1ZM532 610h1v1h-1ZM537 610h1v1h-1ZM538 610h1v1h-1ZM539 610h1v1h-1ZM541 610h1v1h-1ZM542 610h1v1h-1ZM547 610h1v1h-1ZM551 610h1v1h-1ZM552 610h1v1h-1ZM553 610h1v1h-1ZM554 610h1v1h-1ZM557 610h1v1h-1ZM558 610h1v1h-1ZM577 610h1v1h-1ZM578 610h1v1h-1ZM580 610h1v1h-1ZM583 610h1v1h-1ZM584 610h1v1h-1ZM597 610h1v1h-1ZM598 610h1v1h-1ZM606 610h1v1h-1ZM608 610h1v1h-1ZM609 610h1v1h-1ZM612 610h1v1h-1ZM619 610h1v1h-1ZM623 610h1v1h-1ZM629 610h1v1h-1ZM630 610h1v1h-1ZM632 610h1v1h-1ZM633 610h1v1h-1ZM638 610h1v1h-1ZM640 610h1v1h-1ZM644 610h1v1h-1ZM645 610h1v1h-1ZM647 610h1v1h-1ZM648 610h1v1h-1ZM649 610h1v1h-1ZM650 610h1v1h-1ZM654 610h1v1h-1ZM656 610h1v1h-1ZM660 610h1v1h-1ZM664 610h1v1h-1ZM666 610h1v1h-1ZM669 610h1v1h-1ZM670 610h1v1h-1ZM673 610h1v1h-1ZM674 610h1v1h-1ZM675 610h1v1h-1ZM676 610h1v1h-1ZM685 610h1v1h-1ZM689 610h1v1h-1ZM690 610h1v1h-1ZM694 610h1v1h-1ZM697 610h1v1h-1ZM702 610h1v1h-1ZM703 610h1v1h-1ZM705 610h1v1h-1ZM707 610h1v1h-1ZM708 610h1v1h-1ZM715 610h1v1h-1ZM717 610h1v1h-1ZM718 610h1v1h-1ZM719 610h1v1h-1ZM720 610h1v1h-1ZM723 610h1v1h-1ZM724 610h1v1h-1ZM728 610h1v1h-1ZM729 610h1v1h-1ZM730 610h1v1h-1ZM731 610h1v1h-1ZM732 610h1v1h-1ZM733 610h1v1h-1ZM735 610h1v1h-1ZM736 610h1v1h-1ZM739 610h1v1h-1ZM744 610h1v1h-1ZM746 610h1v1h-1ZM748 610h1v1h-1ZM754 610h1v1h-1ZM760 610h1v1h-1ZM761 610h1v1h-1ZM762 610h1v1h-1ZM767 610h1v1h-1ZM771 610h1v1h-1ZM785 610h1v1h-1ZM788 610h1v1h-1ZM790 610h1v1h-1ZM792 610h1v1h-1ZM795 610h1v1h-1ZM799 610h1v1h-1ZM802 610h1v1h-1ZM804 610h1v1h-1ZM807 610h1v1h-1ZM808 610h1v1h-1ZM809 610h1v1h-1ZM811 610h1v1h-1ZM814 610h1v1h-1ZM816 610h1v1h-1Z" fill="#000"/></svg>
</body></html>
